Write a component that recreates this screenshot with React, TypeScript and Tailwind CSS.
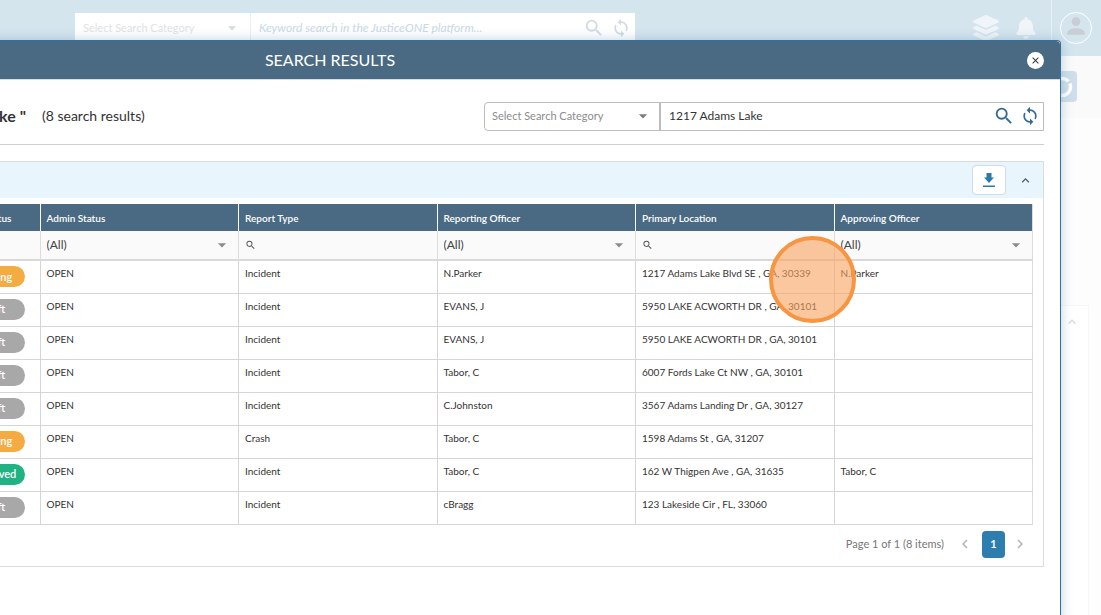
import { useState } from "react";
import { FaBell, FaLayerGroup } from "react-icons/fa";
import {
  MdArrowDropDown,
  MdChevronLeft,
  MdChevronRight,
  MdClose,
  MdKeyboardArrowUp,
  MdPerson,
  MdSearch,
  MdSync,
} from "react-icons/md";

type Status = "Pending" | "Draft" | "Approved";

interface Report {
  id: number;
  status: Status;
  admin: string;
  type: string;
  reporting: string;
  location: string;
  approving: string;
}

const reports: Report[] = [
  { id: 1, status: "Pending", admin: "OPEN", type: "Incident", reporting: "N.Parker", location: "1217 Adams Lake Blvd SE , GA, 30339", approving: "N.Parker" },
  { id: 2, status: "Draft", admin: "OPEN", type: "Incident", reporting: "EVANS, J", location: "5950 LAKE ACWORTH DR , GA, 30101", approving: "" },
  { id: 3, status: "Draft", admin: "OPEN", type: "Incident", reporting: "EVANS, J", location: "5950 LAKE ACWORTH DR , GA, 30101", approving: "" },
  { id: 4, status: "Draft", admin: "OPEN", type: "Incident", reporting: "Tabor, C", location: "6007 Fords Lake Ct NW , GA, 30101", approving: "" },
  { id: 5, status: "Draft", admin: "OPEN", type: "Incident", reporting: "C.Johnston", location: "3567 Adams Landing Dr , GA, 30127", approving: "" },
  { id: 6, status: "Pending", admin: "OPEN", type: "Crash", reporting: "Tabor, C", location: "1598 Adams St , GA, 31207", approving: "" },
  { id: 7, status: "Approved", admin: "OPEN", type: "Incident", reporting: "Tabor, C", location: "162 W Thigpen Ave , GA, 31635", approving: "Tabor, C" },
  { id: 8, status: "Draft", admin: "OPEN", type: "Incident", reporting: "cBragg", location: "123 Lakeside Cir , FL, 33060", approving: "" },
];

const statusColors: Record<Status, string> = {
  Pending: "bg-[#f4ac42]",
  Draft: "bg-[#a8a8a8]",
  Approved: "bg-[#20b283]",
};

const columns = [
  { title: "Admin Status", filter: "select" },
  { title: "Report Type", filter: "search" },
  { title: "Reporting Officer", filter: "select" },
  { title: "Primary Location", filter: "search" },
  { title: "Approving Officer", filter: "select" },
];

const FilterCell = ({ title, filter }: { title: string; filter: string }) => {
  if (filter === "select") {
    return (
      <div className="relative flex h-7 items-center">
        <select aria-label={title} className="h-full w-full appearance-none bg-transparent px-1.5 text-xs text-[#444] outline-none">
          <option>(All)</option>
        </select>
        <MdArrowDropDown className="pointer-events-none absolute right-1.5 text-[#8c8c8c]" size={20} />
      </div>
    );
  }
  return (
    <label className="flex h-7 items-center pl-1.5 text-[#555]">
      <MdSearch size={12} />
      <input aria-label={title} type="text" className="w-full min-w-0 bg-transparent px-1 text-xs outline-none" />
    </label>
  );
};

const App = () => {
  const [keyword, setKeyword] = useState("1217 Adams Lake");

  return (
    <div className="relative min-h-screen overflow-hidden bg-[#fdfdfd] font-[Lato,sans-serif] text-[#333]">
      {/* Page behind the dialog */}
      <header className="flex h-14 bg-[#d4e5ee]">
        <div className="ml-[75px] mt-[13px] flex h-[30px] w-[560px] items-center bg-white">
          <div className="flex h-full w-44 items-center justify-between border-r border-[#e6eff5] pl-2 pr-2 text-[11px] text-[#e1e3e5]">
            Select Search Category
            <MdArrowDropDown size={20} className="text-[#d9dcdf]" />
          </div>
          <span className="flex-1 pl-2 text-xs italic text-[#c9d9e6]">Keyword search in the JusticeONE platform...</span>
          <MdSearch size={22} className="mr-1.5 text-[#d0dbe5]" />
          <MdSync size={20} className="mr-1 text-[#d0dbe5]" />
        </div>
        <div className="ml-auto flex items-center text-[#f0f5f9]">
          <FaLayerGroup size={26} className="mr-4" />
          <FaBell size={22} className="mr-[14px]" />
          <div className="flex h-full items-center border-l border-[#e8f0f5] pl-2 pr-[9px]">
            <div className="flex size-8 items-center justify-center rounded-full border border-white">
              <MdPerson size={26} className="-mt-1 text-[#c8ced3]" />
            </div>
          </div>
        </div>
      </header>
      <div className="flex h-[62px] justify-end bg-[#fafafa] pr-6 pt-[15px]">
        <div className="flex size-[31px] items-center justify-center rounded-sm bg-[#cfdfe9]">
          <svg width="22" height="22" viewBox="0 0 22 22" fill="none" stroke="#fff" strokeWidth="3.5">
            <circle cx="11" cy="11" r="8.5" strokeDasharray="14 2.5" />
          </svg>
        </div>
      </div>
      <div className="mr-3 mt-[187px] flex h-80 justify-end border border-[#f7f7f7] bg-white pr-2 pt-2 text-[#dcdcdc]">
        <MdKeyboardArrowUp size={16} />
      </div>

      {/* Search results dialog */}
      <section
        role="dialog"
        aria-labelledby="dialog-title"
        className="absolute -left-100 bottom-0 right-10 top-10 rounded-tr border-r border-t border-[#33709b] bg-white shadow-[0_0_12px_rgba(70,120,160,0.35)]"
      >
        <div className="relative flex h-[39px] items-center justify-center rounded-tr-sm border-b border-[#cfe0ea] bg-[#496a82]">
          <h1 id="dialog-title" className="text-base text-white">SEARCH RESULTS</h1>
          <button aria-label="Close" className="absolute right-4 flex size-[17px] items-center justify-center rounded-full bg-white text-[#333]">
            <MdClose size={11} />
          </button>
        </div>

        <div className="px-4">
          <div className="flex h-[65px] items-center justify-between border-b border-[#cfcfcf] pt-2">
            <div className="flex items-center">
              <h2 className="w-[410px] whitespace-pre text-right text-base font-bold">" 1217 Adams Lake "</h2>
              <span className="ml-4 text-sm">(8 search results)</span>
            </div>
            <div className="flex h-[29px] w-[560px] rounded-l-sm border border-[#bdbdbd]">
              <div className="relative flex w-44 items-center border-r-2 border-[#bdbdbd]">
                <select aria-label="Search category" className="h-full w-full appearance-none px-[7px] text-[11px] text-[#8c8c8c] outline-none">
                  <option>Select Search Category</option>
                </select>
                <MdArrowDropDown className="pointer-events-none absolute right-1.5 text-[#7d7d7d]" size={20} />
              </div>
              <input
                aria-label="Keyword"
                type="text"
                value={keyword}
                onChange={e => setKeyword(e.target.value)}
                className="min-w-0 flex-1 px-2 text-xs outline-none"
              />
              <button aria-label="Search" className="mr-[5px] text-[#336a95]">
                <MdSearch size={22} />
              </button>
              <button aria-label="Reset" className="mr-[3px] text-[#336a95]">
                <MdSync size={20} />
              </button>
            </div>
          </div>

          <div className="mt-4 border border-[#dcdcdc]">
            <div className="flex h-9 items-center justify-end bg-[#e8f5fd]">
              <button aria-label="Download" className="flex h-[30px] w-[34px] items-center justify-center rounded-sm border border-[#cfdde6] bg-white">
                <svg width="14" height="14" viewBox="0 0 14 14" fill="#2c7aa5">
                  <path d="M4.500 0h5v4.500H12L7 10 2 4.500h2.500zM1 12.500h12V14H1z" />
                </svg>
              </button>
              <button aria-label="Collapse" className="ml-3 mr-2.5 text-[#4a5a66]">
                <MdKeyboardArrowUp size={15} />
              </button>
            </div>

            <div className="px-2.5 pt-1.5">
              <table className="w-full table-fixed border-collapse border-r border-[#dcdcdc] text-[10px] leading-[14px]">
                <thead>
                  <tr className="h-[27px] bg-[#496a82] text-left text-white">
                    <th className="w-[413px] pr-7 text-right font-semibold">Status</th>
                    {columns.map(col => (
                      <th key={col.title} className="border-l border-white px-1.5 font-semibold">{col.title}</th>
                    ))}
                  </tr>
                  <tr className="border-b-2 border-[#d9d9d9] bg-[#fafafa]">
                    <td />
                    {columns.map(col => (
                      <td key={col.title} className="border-l border-[#dcdcdc] p-0">
                        <FilterCell title={col.title} filter={col.filter} />
                      </td>
                    ))}
                  </tr>
                </thead>
                <tbody>
                  {reports.map(report => (
                    <tr key={report.id} className="h-[33px] border-b border-[#d6d6d6] align-top">
                      <td className="py-[5px] pr-[15px]">
                        <span className={`ml-auto flex h-[21px] w-16 items-center justify-center rounded-full text-[11px] font-semibold text-white ${statusColors[report.status]}`}>
                          {report.status}
                        </span>
                      </td>
                      <td className="border-l border-[#d6d6d6] px-1.5 py-[5px]">{report.admin}</td>
                      <td className="border-l border-[#d6d6d6] px-1.5 py-[5px]">{report.type}</td>
                      <td className="border-l border-[#d6d6d6] px-1.5 py-[5px]">{report.reporting}</td>
                      <td className="whitespace-nowrap border-l border-[#d6d6d6] px-1.5 py-[5px]">{report.location}</td>
                      <td className="border-l border-[#d6d6d6] px-1.5 py-[5px]">{report.approving}</td>
                    </tr>
                  ))}
                </tbody>
              </table>

              <div className="flex h-[41px] items-center justify-end pb-0.5 text-[11px] text-[#777]">
                <span className="mr-3">Page 1 of 1 (8 items)</span>
                <button aria-label="Previous page" className="text-[#b5b5b5]">
                  <MdChevronLeft size={18} />
                </button>
                <button className="ml-2 mr-1.5 h-[27px] w-[23px] rounded-sm bg-[#2d7dae] font-bold text-white">1</button>
                <button aria-label="Next page" className="mr-1 text-[#b5b5b5]">
                  <MdChevronRight size={18} />
                </button>
              </div>
            </div>
          </div>
        </div>
      </section>

      {/* Click marker */}
      <div className="pointer-events-none absolute left-[769px] top-[236px] size-[87px] rounded-full border-4 border-[#f79540] bg-[#f9a25f]/60" />
    </div>
  );
};

export default App;
